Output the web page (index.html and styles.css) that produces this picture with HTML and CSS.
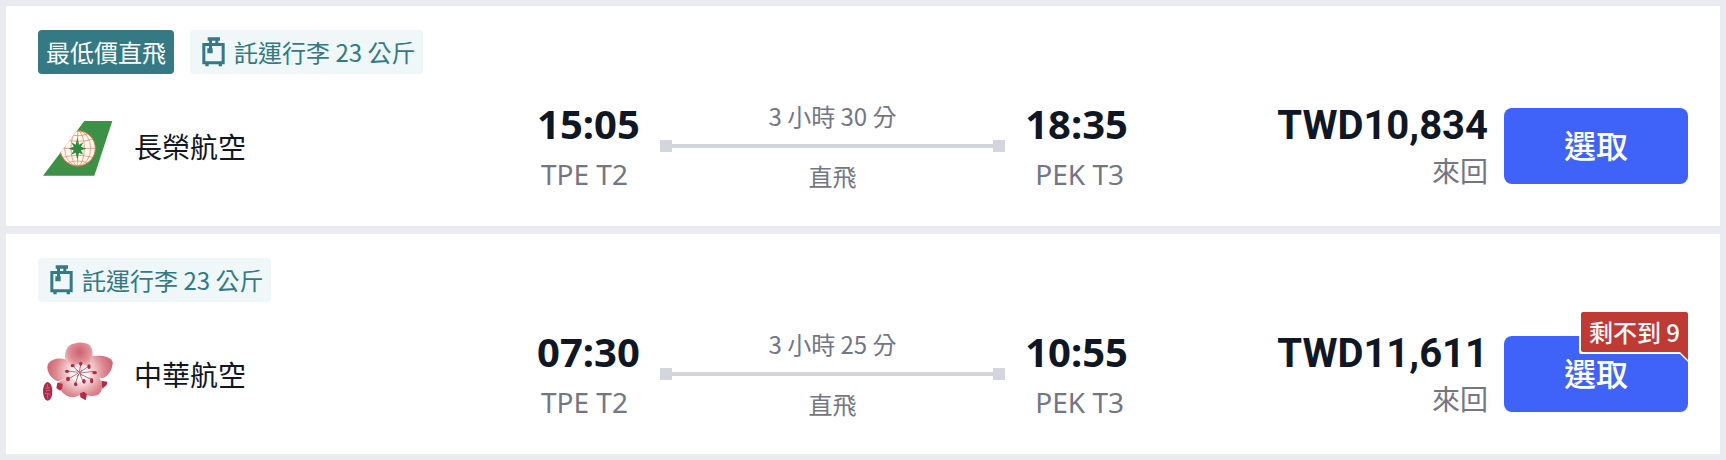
FILE: index.html
```html
<!DOCTYPE html>
<html lang="zh-Hant-TW">
<head>
    <meta charset="UTF-8">
    <meta name="viewport" content="width=device-width, initial-scale=1.0">
    <title>航班選擇</title>
    <link rel="stylesheet" href="styles.css">
</head>
<body>
    <!-- Shared icons -->
    <svg class="sprite" aria-hidden="true">
        <symbol id="luggage" viewBox="9 33 96 96">
            <path d="M38 37H75V47H70V54H89V118H81V124H71V118H41V124H31V118H22V54H42V47H38ZM51 47V54H61V47ZM31 63V109H80V63H51V70H53V85H37V70H42V63Z" fill="currentColor" fill-rule="evenodd"/>
        </symbol>
    </svg>

    <main class="flights">
        <article class="card">
            <div class="tags">
                <span class="tag tag-best">最低價直飛</span>
                <span class="tag tag-luggage"><svg class="tag-icon"><use href="#luggage"/></svg>託運行李 23 公斤</span>
            </div>
            <div class="row">
                <div class="airline">
                    <svg class="logo" viewBox="24 -12 240 240" aria-hidden="true">
                        <defs>
                            <clipPath id="tail"><path d="M163 33H247L193 197H39Z"/></clipPath>
                        </defs>
                        <path d="M163 33H247L193 197H39Z" fill="#3d9147"/>
                        <g clip-path="url(#tail)">
                            <circle cx="143" cy="115" r="53" fill="#fff9f0" stroke="#d9713f" stroke-width="3"/>
                            <g fill="none" stroke="#e0805a" stroke-width="2">
                                <ellipse cx="143" cy="115" rx="20" ry="53"/>
                                <ellipse cx="143" cy="115" rx="39" ry="53"/>
                                <path d="M143 62V168M90 115H196M98 88Q143 100 188 88M98 142Q143 130 188 142M112 72Q143 82 174 72M112 158Q143 148 174 158"/>
                            </g>
                            <path d="M142 82L147 104L160 97L153 110L169 116L153 121L160 134L147 128L142 150L137 128L124 134L131 121L115 116L131 110L124 97L137 104Z" fill="#2f8a40"/>
                        </g>
                    </svg>
                    <span class="airline-name">長榮航空</span>
                </div>
                <div class="flight">
                    <div class="stop">
                        <time class="time">15:05</time>
                        <span class="airport">TPE T2</span>
                    </div>
                    <div class="route">
                        <span class="route-text">3 小時 30 分</span>
                        <span class="route-line"></span>
                        <span class="route-text">直飛</span>
                    </div>
                    <div class="stop stop-end">
                        <time class="time">18:35</time>
                        <span class="airport">PEK T3</span>
                    </div>
                </div>
                <div class="booking">
                    <div class="price">
                        <strong class="amount">TWD10,834</strong>
                        <span class="trip">來回</span>
                    </div>
                    <div class="action">
                        <button class="select" type="button">選取</button>
                    </div>
                </div>
            </div>
        </article>

        <article class="card">
            <div class="tags">
                <span class="tag tag-luggage"><svg class="tag-icon"><use href="#luggage"/></svg>託運行李 23 公斤</span>
            </div>
            <div class="row">
                <div class="airline">
                    <svg class="logo" viewBox="24 3 240 240" aria-hidden="true">
                        <defs>
                            <radialGradient id="petal" gradientUnits="userSpaceOnUse" cx="150" cy="118" r="104">
                                <stop offset="0" stop-color="#fffafa"/>
                                <stop offset="0.35" stop-color="#f6d5d5"/>
                                <stop offset="0.7" stop-color="#dc8790"/>
                                <stop offset="1" stop-color="#cc5f70"/>
                            </radialGradient>
                            <radialGradient id="topPetal" gradientUnits="userSpaceOnUse" cx="148" cy="57" r="58">
                                <stop offset="0" stop-color="#ce6070"/>
                                <stop offset="0.55" stop-color="#e09198"/>
                                <stop offset="1" stop-color="#f8dede"/>
                            </radialGradient>
                        </defs>
                        <!-- Petals -->
                        <path d="M106 79C86 72 60 78 53 96C48 113 63 140 85 145L150 120Z" fill="url(#petal)"/>
                        <path d="M185 70C205 65 243 68 248 88C249 106 236 132 216 136L150 120Z" fill="url(#petal)"/>
                        <path d="M85 148C86 172 104 193 130 193Q150 190 158 177L150 118L112 134Z" fill="url(#petal)"/>
                        <path d="M154 176C168 191 188 191 203 186C220 176 219 155 208 133L150 118Z" fill="url(#petal)"/>
                        <path d="M106 80C101 51 117 32 132 32Q149 26 166 31C185 32 191 54 187 82L151 120Z" fill="url(#topPetal)"/>
                        <ellipse cx="150" cy="119" rx="31" ry="27" fill="#fff" opacity="0.65"/>
                        <!-- Sepals -->
                        <path d="M82 149L98 152L97 166L90 173L79 165ZM214 143L232 146L230 156L217 167ZM150 181L162 176L171 184L167 202L151 193Z" fill="#b32c48"/>
                        <!-- Stamens -->
                        <g stroke="#8e3048" stroke-width="2" fill="none">
                            <path d="M147 119L128 98M148 117L152 96M151 117L174 101M151 120L191 115M150 123L184 139M150 124L161 150M146 123L136 151M144 121L116 137M143 118L115 114M140 110L156 127M156 110L141 131"/>
                        </g>
                        <g fill="#a92c4a">
                            <ellipse cx="128" cy="98" rx="6" ry="5"/>
                            <ellipse cx="152" cy="92" rx="5" ry="6"/>
                            <ellipse cx="177" cy="101" rx="5" ry="7"/>
                            <ellipse cx="194" cy="119" rx="7" ry="5"/>
                            <ellipse cx="185" cy="143" rx="5" ry="8"/>
                            <ellipse cx="162" cy="145" rx="5" ry="7"/>
                            <ellipse cx="137" cy="154" rx="5" ry="6"/>
                            <ellipse cx="114" cy="138" rx="6" ry="7"/>
                            <ellipse cx="111" cy="115" rx="6" ry="5"/>
                        </g>
                        <!-- Seal -->
                        <ellipse cx="53" cy="175" rx="14" ry="28" fill="#ad2948"/>
                        <path d="M52 153V163M46 166L60 164M48 174L59 171M45 181L60 183M53 184V197" stroke="#dc8b9e" stroke-width="2" fill="none"/>
                    </svg>
                    <span class="airline-name">中華航空</span>
                </div>
                <div class="flight">
                    <div class="stop">
                        <time class="time">07:30</time>
                        <span class="airport">TPE T2</span>
                    </div>
                    <div class="route">
                        <span class="route-text">3 小時 25 分</span>
                        <span class="route-line"></span>
                        <span class="route-text">直飛</span>
                    </div>
                    <div class="stop stop-end">
                        <time class="time">10:55</time>
                        <span class="airport">PEK T3</span>
                    </div>
                </div>
                <div class="booking">
                    <div class="price">
                        <strong class="amount">TWD11,611</strong>
                        <span class="trip">來回</span>
                    </div>
                    <div class="action">
                        <button class="select" type="button">選取</button>
                        <span class="badge">剩不到 9</span>
                    </div>
                </div>
            </div>
        </article>
    </main>
</body>
</html>
```

FILE: styles.css
```css
* {
    box-sizing: border-box;
}

body {
    margin: 0;
    background: #eaebf0;
    color: #0f1624;
    font-family: "Noto Sans CJK TC", sans-serif;
}

.sprite {
    display: none;
}

.flights {
    display: flex;
    flex-direction: column;
    gap: 8px;
    padding: 6px;
}

.card {
    padding: 24px 32px 32px;
    background: #fff;
}

/* Tags */
.tags {
    display: flex;
    gap: 16px;
    margin-bottom: 24px;
}

.tag {
    display: flex;
    align-items: center;
    gap: 4px;
    height: 44px;
    padding: 0 8px;
    border-radius: 4px;
    font-size: 24px;
    line-height: 40px;
    white-space: nowrap;
}

.tag-best {
    background: #347984;
    color: #fff;
}

.tag-luggage {
    background: #eff7f9;
    color: #347984;
}

.tag-icon {
    width: 32px;
    height: 32px;
}

/* Flight row */
.row {
    display: grid;
    grid-template-columns: 499fr 591fr 560fr;
    align-items: center;
}

.airline {
    display: flex;
    align-items: center;
    gap: 16px;
}

.logo {
    width: 80px;
    height: 80px;
}

.airline-name {
    font-size: 28px;
    line-height: 40px;
}

.flight {
    display: flex;
    gap: 20px;
}

.stop {
    display: flex;
    flex-direction: column;
    font-family: "Noto Sans", sans-serif;
}

.stop-end {
    text-align: right;
}

.time {
    font-size: 40px;
    font-weight: 700;
    line-height: 52px;
}

.airport {
    padding: 4px 4px 0;
    color: #737685;
    font-size: 28px;
    line-height: 40px;
}

.route {
    display: flex;
    flex: 1;
    flex-direction: column;
    gap: 6px;
    text-align: center;
}

.route-text {
    color: #737685;
    font-size: 24px;
    line-height: 36px;
}

.route-line {
    height: 12px;
    background:
        linear-gradient(#d4d6de, #d4d6de) left / 12px 12px no-repeat,
        linear-gradient(#d4d6de, #d4d6de) right / 12px 12px no-repeat,
        linear-gradient(#d4d6de, #d4d6de) center / 100% 4px no-repeat;
}

/* Price and button */
.booking {
    display: flex;
    align-items: center;
    justify-content: flex-end;
    gap: 16px;
}

.price {
    display: flex;
    flex-direction: column;
    text-align: right;
}

.amount {
    font-family: Roboto, sans-serif;
    font-size: 40px;
    font-weight: 700;
    line-height: 48px;
}

.trip {
    color: #737685;
    font-size: 28px;
    line-height: 40px;
}

.action {
    position: relative;
}

.select {
    display: block;
    width: 184px;
    height: 76px;
    padding: 0 0 4px;
    border: none;
    border-radius: 8px;
    background: #3f63f8;
    color: #fff;
    font-family: inherit;
    font-size: 32px;
    font-weight: 500;
    line-height: 40px;
    cursor: pointer;
}

.select:hover {
    background: #3253dc;
}

.badge {
    position: absolute;
    top: -24px;
    right: 0;
    padding: 0 8px;
    border-radius: 2px 2px 0 2px;
    background: #bf3a34;
    box-shadow: -2px 2px 0 #fff;
    color: #fff;
    font-size: 24px;
    font-weight: 500;
    line-height: 40px;
    white-space: nowrap;
}

/* Folded corner under the badge */
.badge::before,
.badge::after {
    content: "";
    position: absolute;
    top: 100%;
    right: 0;
    width: 10px;
    height: 10px;
    background: #fff;
    clip-path: polygon(0 0, 100% 0, 100% 100%);
}

.badge::after {
    width: 8px;
    height: 8px;
    background: #bf3a34;
}
```
